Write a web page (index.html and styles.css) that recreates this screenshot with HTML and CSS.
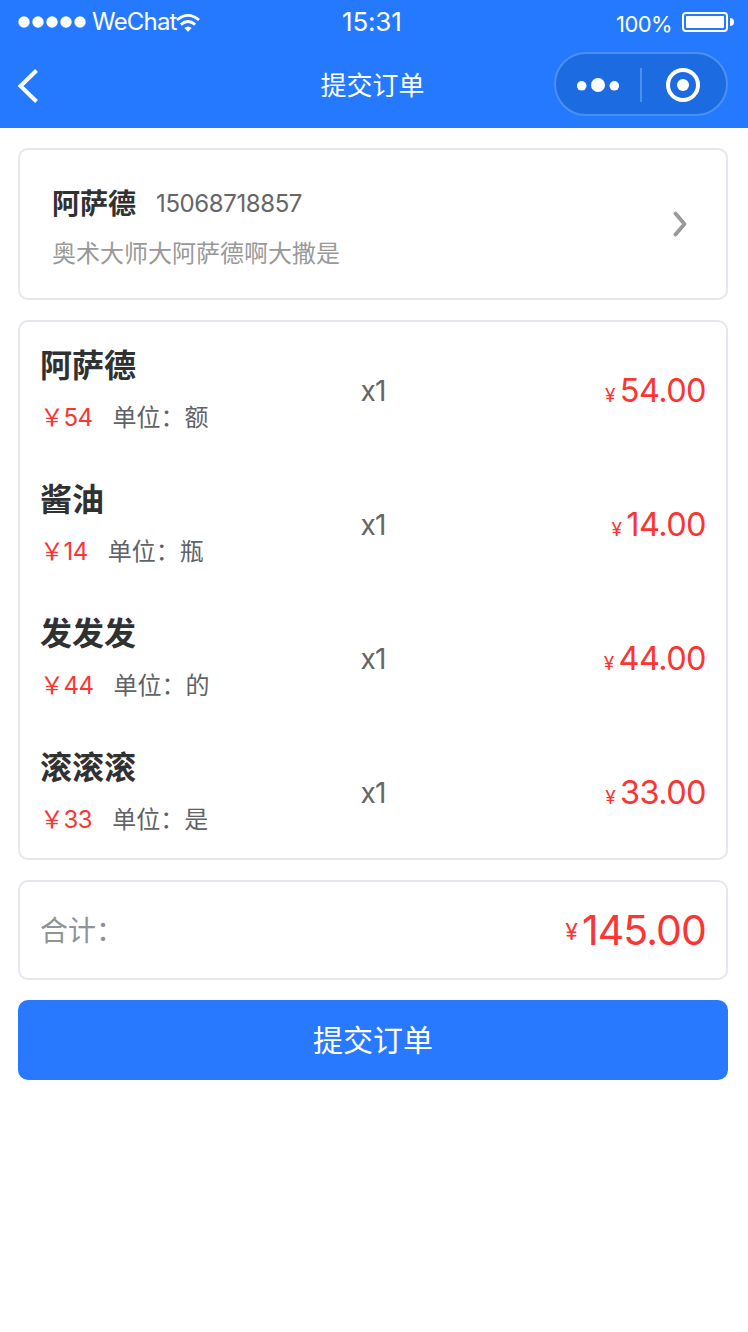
FILE: index.html
```html
<!DOCTYPE html>
<html lang="zh-CN">
<head>
    <meta charset="UTF-8">
    <meta name="viewport" content="width=device-width, initial-scale=1.0">
    <title>提交订单</title>
    <link rel="stylesheet" href="styles.css">
</head>
<body>
    <!-- Header -->
    <header class="header">
        <div class="status-bar">
            <div class="carrier">
                <svg class="signal" width="70" height="14" viewBox="0 0 70 14" fill="#fff">
                    <circle cx="6" cy="7" r="5.7"/>
                    <circle cx="20" cy="7" r="5.7"/>
                    <circle cx="34" cy="7" r="5.7"/>
                    <circle cx="48" cy="7" r="5.7"/>
                    <circle cx="62" cy="7" r="5.7"/>
                </svg>
                <span class="carrier-name">WeChat</span>
                <svg class="wifi" width="24" height="20" viewBox="0 0 24 20" fill="none" stroke="#fff" stroke-width="2.8">
                    <path d="M1 7Q12 -2.2 23 7"/>
                    <path d="M4.8 11.6Q12 5.4 19.2 11.6"/>
                    <path d="M12 18.8L8.3 15Q12 11.8 15.7 15Z" fill="#fff" stroke="none"/>
                </svg>
            </div>
            <span class="time">15:31</span>
            <div class="power">
                <span class="percent">100%</span>
                <svg width="52" height="20" viewBox="0 0 52 20">
                    <rect x="1" y="1" width="44" height="18" rx="3" fill="none" stroke="#fff" stroke-width="2"/>
                    <rect x="4" y="4" width="38" height="12" rx="1" fill="#fff"/>
                    <path d="M48 6Q52 6 52 10T48 14Z" fill="#fff"/>
                </svg>
            </div>
        </div>
        <div class="nav-bar">
            <svg class="back" width="22" height="36" viewBox="0 0 22 36" fill="none" stroke="#fff" stroke-width="4">
                <path d="M19.5 2.5L3.5 18L19.5 33.5"/>
            </svg>
            <h1 class="title">提交订单</h1>
            <div class="capsule">
                <svg class="more" width="44" height="16" viewBox="0 0 44 16" fill="#fff">
                    <circle cx="5.7" cy="8.8" r="4.8"/>
                    <circle cx="22" cy="8" r="7"/>
                    <circle cx="38.3" cy="8.8" r="4.8"/>
                </svg>
                <span class="divider"></span>
                <svg class="target" width="36" height="36" viewBox="0 0 36 36">
                    <circle cx="18" cy="18" r="15" fill="none" stroke="#fff" stroke-width="4"/>
                    <circle cx="18" cy="18" r="6" fill="#fff"/>
                </svg>
            </div>
        </div>
    </header>

    <main class="content">
        <!-- Address -->
        <section class="card address">
            <div class="receiver">
                <div class="contact">
                    <span class="name">阿萨德</span>
                    <span class="phone">15068718857</span>
                </div>
                <p class="address-text">奥术大师大阿萨德啊大撒是</p>
            </div>
            <svg class="arrow" width="14" height="26" viewBox="0 0 14 26" fill="none" stroke="#999" stroke-width="3.8" stroke-linecap="round" stroke-linejoin="round">
                <path d="M2.5 2.5L11.5 13L2.5 23.5"/>
            </svg>
        </section>

        <!-- Goods -->
        <section class="card goods">
            <div class="item">
                <div class="info">
                    <h2>阿萨德</h2>
                    <p><span class="price">￥54</span><span class="unit">单位：额</span></p>
                </div>
                <span class="count">x1</span>
                <div class="amount"><span class="yen">¥</span>54.00</div>
            </div>
            <div class="item">
                <div class="info">
                    <h2>酱油</h2>
                    <p><span class="price">￥14</span><span class="unit">单位：瓶</span></p>
                </div>
                <span class="count">x1</span>
                <div class="amount"><span class="yen">¥</span>14.00</div>
            </div>
            <div class="item">
                <div class="info">
                    <h2>发发发</h2>
                    <p><span class="price">￥44</span><span class="unit">单位：的</span></p>
                </div>
                <span class="count">x1</span>
                <div class="amount"><span class="yen">¥</span>44.00</div>
            </div>
            <div class="item">
                <div class="info">
                    <h2>滚滚滚</h2>
                    <p><span class="price">￥33</span><span class="unit">单位：是</span></p>
                </div>
                <span class="count">x1</span>
                <div class="amount"><span class="yen">¥</span>33.00</div>
            </div>
        </section>

        <!-- Total -->
        <section class="card total">
            <span class="total-label">合计：</span>
            <div class="amount total-amount"><span class="yen">¥</span>145.00</div>
        </section>

        <button class="submit">提交订单</button>
    </main>
</body>
</html>
```
FILE: styles.css
```css
* {
    margin: 0;
    padding: 0;
    box-sizing: border-box;
}

body {
    font-family: Inter, 'Noto Sans CJK SC', sans-serif;
    background: #fff;
    color: #303133;
    min-height: 100vh;
}

svg {
    display: block;
    flex-shrink: 0;
}

.header {
    height: 128px;
    background: #2479ff;
    color: #fff;
}

.status-bar {
    height: 44px;
    padding: 0 14px 0 18px;
    display: grid;
    grid-template-columns: 324px auto 1fr;
    align-items: center;
}

.carrier {
    display: flex;
    align-items: center;
}

.carrier-name {
    margin-left: 4px;
    font-size: 24px;
    line-height: 44px;
    letter-spacing: -0.8px;
}

.wifi {
    margin-top: 2px;
    margin-left: -1px;
}

.time {
    font-size: 26px;
    line-height: 43px;
    height: 44px;
    letter-spacing: -0.2px;
}

.power {
    display: flex;
    justify-content: flex-end;
    align-items: center;
    gap: 10px;
}

.percent {
    font-size: 22px;
    line-height: 40px;
    padding-top: 4px;
    letter-spacing: -0.6px;
}

.nav-bar {
    height: 84px;
    padding: 0 20px 0 17px;
    display: grid;
    grid-template-columns: 1fr auto 1fr;
    align-items: center;
}

.title {
    font-size: 26px;
    line-height: 84px;
    font-weight: 400;
}

.capsule {
    justify-self: end;
    width: 174px;
    height: 64px;
    margin-bottom: 4px;
    border: 2px solid #4a90f0;
    border-radius: 32px;
    background: #1d6be0;
    display: flex;
    align-items: center;
    padding: 2px 0 0 20px;
}

.divider {
    width: 2px;
    height: 34px;
    margin: 0 23px 0 20px;
    background: #4a90f0;
}

.content {
    padding: 20px 20px 0 18px;
    display: flex;
    flex-direction: column;
    gap: 20px;
}

.card {
    border: 2px solid #e4e7ed;
    border-radius: 10px;
}

.address {
    height: 152px;
    padding: 0 39px 0 32px;
    display: flex;
    justify-content: space-between;
    align-items: center;
}

.receiver {
    padding-top: 10px;
}

.contact {
    display: flex;
    align-items: center;
    line-height: 40px;
    margin-bottom: 10px;
}

.name {
    font-size: 28px;
    font-weight: 700;
    margin-right: 20px;
}

.phone {
    font-size: 24px;
    letter-spacing: -0.4px;
    color: #666;
}

.address-text {
    font-size: 24px;
    line-height: 40px;
    color: #999;
}

.item {
    height: 134px;
    padding: 0 20px;
    display: grid;
    grid-template-columns: 1fr auto 1fr;
    align-items: center;
}

.info h2 {
    padding-top: 2px;
    font-size: 32px;
    line-height: 48px;
    font-weight: 700;
}

.info p {
    margin-top: 8px;
    font-size: 24px;
    line-height: 40px;
}

.price {
    color: #fa3534;
    margin-right: 20px;
    letter-spacing: -0.5px;
}

.unit {
    color: #606266;
}

.count {
    padding-top: 3px;
    font-size: 28px;
    color: #666;
    letter-spacing: -0.8px;
}

.amount {
    padding-top: 3px;
    text-align: right;
    font-size: 32.5px;
    color: #fa3534;
    letter-spacing: -0.6px;
}

.yen {
    font-size: 19px;
    margin-right: 5px;
}

.total {
    height: 100px;
    padding: 0 20px;
    display: flex;
    justify-content: space-between;
    align-items: center;
}

.total-label {
    padding-top: 2px;
    font-size: 28px;
    line-height: 40px;
    color: #909399;
}

.total-amount {
    padding: 0;
    font-size: 41px;
    line-height: 48px;
    letter-spacing: -0.9px;
    display: flex;
    align-items: center;
}

.total-amount .yen {
    padding-top: 4px;
    font-size: 23px;
}

.submit {
    height: 80px;
    padding-bottom: 4px;
    border: none;
    border-radius: 10px;
    background: #2979ff;
    color: #fff;
    font-family: inherit;
    font-size: 30px;
    cursor: pointer;
}
```
